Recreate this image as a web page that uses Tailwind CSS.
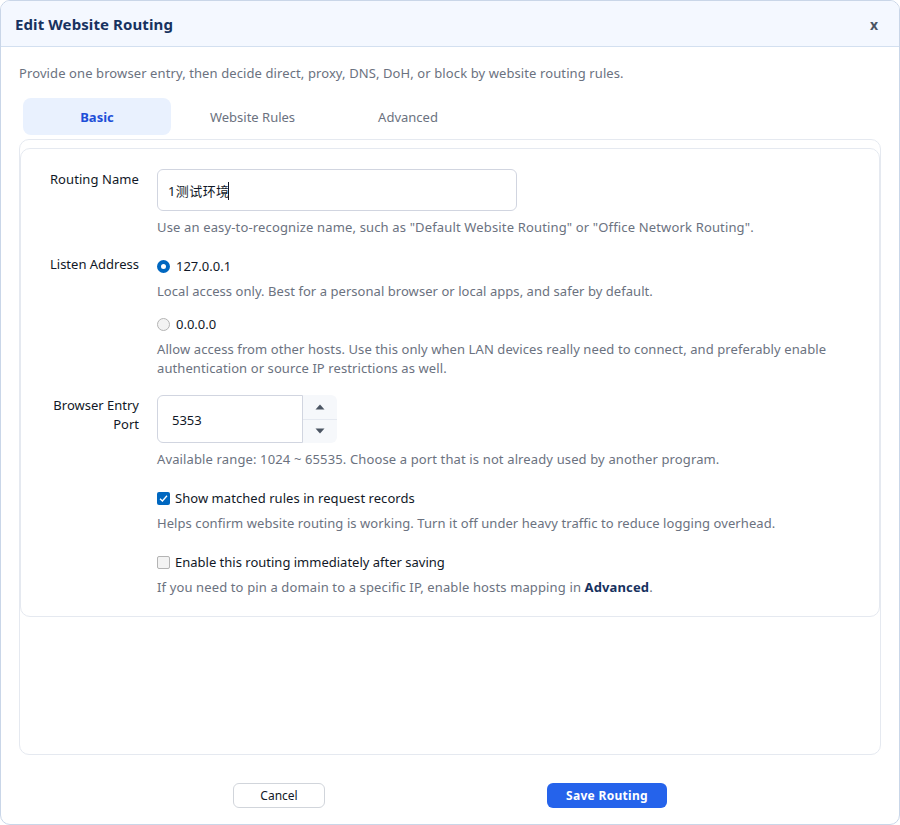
<!DOCTYPE html>
<html lang="en">
<head>
  <meta charset="UTF-8">
  <meta name="viewport" content="width=device-width, initial-scale=1.0">
  <title>Edit Website Routing</title>
  <script src="https://cdn.jsdelivr.net/npm/@tailwindcss/browser@4"></script>
</head>
<body class="bg-white font-['Noto_Sans','Noto_Sans_CJK_SC',sans-serif] text-[13px] leading-[19px] text-[#111827]">
  <div class="w-[900px] h-[825px] flex flex-col bg-white border border-[#c9d6e8] rounded-[10px] overflow-hidden">
    <!-- header -->
    <div class="h-[46px] shrink-0 flex items-center justify-between pl-[14px] pr-[21px] bg-[#f4f8ff] border-b border-[#d3e0f0]">
      <h1 class="pt-[1px] text-[15px] font-bold tracking-[0.1px] text-[#17325f]">Edit Website Routing</h1>
      <button class="pt-[1px] text-[14px] font-bold text-[#4b5563]">x</button>
    </div>

    <div class="flex-1 flex flex-col px-[18px]">
      <p class="mt-[17px] tracking-[0.1px] text-[#6b7280]">Provide one browser entry, then decide direct, proxy, DNS, DoH, or block by website routing rules.</p>

      <!-- tabs -->
      <div class="flex mt-[15px] ml-[4px] h-[37px]">
        <button class="w-[148px] pt-[1px] rounded-[8px] bg-[#e9f1fe] font-bold text-[#1d4ed8]">Basic</button>
        <button class="w-[163px] pt-[1px] text-[#6b7280]">Website Rules</button>
        <button class="w-[148px] pt-[1px] text-[#6b7280]">Advanced</button>
      </div>

      <!-- tab panel -->
      <div class="mt-[4px] h-[616px] border border-[#e5e9f0] rounded-[10px] pt-[8px]">
        <div class="h-[469px] border border-[#e5e9f0] rounded-[10px] pr-[20px]">

          <div class="flex mt-[20px]">
            <label class="w-[118px] text-right pt-[1px] tracking-[0.08px]">Routing Name</label>
            <div class="ml-[18px] flex-1">
              <div class="relative w-[360px]">
                <input value="1测试环境" class="w-full h-[42px] px-[10px] border border-[#d1d5e0] rounded-[6px] outline-none tracking-[0.4px]">
                <span class="absolute left-[71px] top-[13px] w-px h-[18px] bg-[#111827]"></span>
              </div>
              <p class="mt-[7px] tracking-[0.15px] text-[#6b7280]">Use an easy-to-recognize name, such as "Default Website Routing" or "Office Network Routing".</p>
            </div>
          </div>

          <div class="flex mt-[18px]">
            <label class="w-[118px] text-right">Listen Address</label>
            <div class="ml-[18px] flex-1">
              <div class="flex items-center gap-[6px] h-[19px] mt-[2px]">
                <span class="w-[13px] h-[13px] rounded-full border-[4px] border-[#0067c0] bg-white"></span>
                <span>127.0.0.1</span>
              </div>
              <p class="mt-[6px] tracking-[0.05px] text-[#6b7280]">Local access only. Best for a personal browser or local apps, and safer by default.</p>
              <div class="flex items-center gap-[6px] h-[19px] mt-[14px]">
                <span class="w-[13px] h-[13px] rounded-full border border-[#b4b4b4] bg-[#f3f3f3]"></span>
                <span>0.0.0.0</span>
              </div>
              <p class="mt-[6px] tracking-[0.09px] text-[#6b7280]">Allow access from other hosts. Use this only when LAN devices really need to connect, and preferably enable authentication or source IP restrictions as well.</p>
            </div>
          </div>

          <div class="flex mt-[17px]">
            <label class="w-[118px] text-right pl-[20px] pt-[1px]">Browser Entry Port</label>
            <div class="ml-[18px] flex-1">
              <div class="flex">
                <input value="5353" class="w-[146px] h-[48px] pl-[14px] pt-[2px] border border-[#d1d5e0] rounded-l-[6px] outline-none">
                <div class="w-[34px] h-[48px] flex flex-col bg-[#f6f8fb] rounded-r-[6px]">
                  <span class="flex-1 flex items-center justify-center border-b border-[#e5e9f0]">
                    <svg width="10" height="6" viewBox="0 0 10 6"><path d="M5 .5 9.5 5.5H.5z" fill="#4b5563"/></svg>
                  </span>
                  <span class="flex-1 flex items-center justify-center">
                    <svg width="10" height="6" viewBox="0 0 10 6"><path d="M.5.5h9L5 5.5z" fill="#4b5563"/></svg>
                  </span>
                </div>
              </div>
              <p class="mt-[7px] tracking-[0.13px] text-[#6b7280]">Available range: 1024 ~ 65535. Choose a port that is not already used by another program.</p>

              <div class="flex items-center gap-[5px] h-[19px] mt-[20px]">
                <span class="w-[13px] h-[13px] rounded-[2px] bg-[#0067c0] flex items-center justify-center">
                  <svg width="9" height="9" viewBox="0 0 9 9" fill="none"><path d="M1 4.8 3.4 7 8 1.8" stroke="#fff" stroke-width="1.3"/></svg>
                </span>
                <span class="tracking-[0.05px]">Show matched rules in request records</span>
              </div>
              <p class="mt-[6px] tracking-[0.07px] text-[#6b7280]">Helps confirm website routing is working. Turn it off under heavy traffic to reduce logging overhead.</p>

              <div class="flex items-center gap-[5px] h-[19px] mt-[20px]">
                <span class="w-[13px] h-[13px] rounded-[2px] border border-[#b4b4b4] bg-[#f3f3f3]"></span>
                <span>Enable this routing immediately after saving</span>
              </div>
              <p class="mt-[6px] tracking-[0.13px] text-[#6b7280]">If you need to pin a domain to a specific IP, enable hosts mapping in <strong class="font-bold text-[#17325f]">Advanced</strong>.</p>
            </div>
          </div>

        </div>
      </div>

      <!-- footer -->
      <div class="flex mt-[28px]">
        <button class="ml-[214px] w-[92px] h-[25px] border border-[#d1d5db] rounded-[6px] bg-white text-[12px]">Cancel</button>
        <button class="ml-[222px] w-[120px] h-[25px] rounded-[6px] bg-[#2563eb] text-[12px] font-bold tracking-[0.3px] text-white">Save Routing</button>
      </div>
    </div>
  </div>
</body>
</html>
